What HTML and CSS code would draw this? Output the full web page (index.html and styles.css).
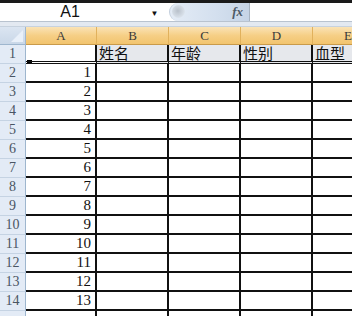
FILE: index.html
```html
<!DOCTYPE html>
<html lang="zh-CN">
<head>
    <meta charset="UTF-8">
    <title>Sheet1</title>
    <link rel="stylesheet" href="styles.css">
</head>
<body>
    <div class="topbar"></div>
    <div class="formula-bar">
        <div class="name-box">A1</div>
        <div class="drop">&#9660;</div>
        <div class="fx-pill">
            <span class="knob"></span>
            <span class="fx">fx</span>
        </div>
        <div class="formula-input"></div>
    </div>
    <div class="gap"></div>

    <div class="sheet" id="sheet">
        <div class="corner">
            <svg width="14" height="14" viewBox="0 0 14 14"><polygon points="13,1 13,13 1,13" fill="#e9f0f9"/></svg>
        </div>
        <div class="col-head">A</div>
        <div class="col-head">B</div>
        <div class="col-head">C</div>
        <div class="col-head">D</div>
        <div class="col-head last">E</div>

        <div class="row-head">1</div>
        <div class="cell first active"><span class="mark"></span></div>
        <div class="cell first sel">姓名</div>
        <div class="cell first sel">年龄</div>
        <div class="cell first sel">性别</div>
        <div class="cell first sel">血型</div>
    </div>

    <script>
        // rows 2..15, column A holds a running number; row 15 is only a sliver
        const sheet = document.getElementById('sheet');
        for (let r = 2; r <= 15; r++) {
            let html = `<div class="row-head">${r <= 14 ? r : ''}</div>`;
            html += `<div class="cell num">${r <= 14 ? r - 1 : ''}</div>`;
            for (let c = 0; c < 4; c++) {
                html += `<div class="cell"></div>`;
            }
            sheet.insertAdjacentHTML('beforeend', html);
        }
    </script>
</body>
</html>
```

FILE: styles.css
```css
html, body {
    margin: 0;
    padding: 0;
    overflow: hidden;
    background: #fff;
}
body {
    width: 352px;
    height: 316px;
    font-family: "Liberation Sans", Arial, sans-serif;
}
.topbar {
    height: 3px;
    background: #1a1a1a;
}
.formula-bar {
    height: 18px;
    display: flex;
    align-items: center;
    background: #fff;
    border-bottom: 1px solid #b9c3cf;
}
.name-box {
    width: 140px;
    text-align: center;
    font-size: 16px;
    color: #111;
}
.drop {
    width: 29px;
    font-size: 8px;
    color: #111;
    text-align: center;
    padding-top: 2px;
}
.fx-pill {
    width: 81px;
    height: 18px;
    display: flex;
    align-items: center;
    justify-content: flex-end;
    box-sizing: border-box;
    border-radius: 9px 0 0 9px;
    border-left: 1px solid #c3cfdd;
    border-right: 1px solid #a7b3c1;
    background: linear-gradient(to right, #e4ecf6, #d3dfee 60%, #c6d4e6);
    position: relative;
}
.knob {
    position: absolute;
    left: 2px;
    top: 2px;
    width: 13px;
    height: 13px;
    border-radius: 50%;
    background: radial-gradient(circle at 45% 45%, #b9c1cb, #dbe3ec 70%, transparent 75%);
}
.fx {
    font-family: "Liberation Serif", "Times New Roman", serif;
    font-style: italic;
    font-weight: bold;
    font-size: 13px;
    color: #4d5966;
    padding-right: 6px;
}
.formula-input {
    flex: 1;
    height: 18px;
    background: #fff;
}
.gap {
    height: 4px;
    background: #e3e9f1;
    border-bottom: 1px solid #c7d2de;
}

.sheet {
    display: grid;
    grid-template-columns: 26px 71px 72px 72px 72px 39px;
    grid-auto-rows: 19px;
    grid-template-rows: 18px;
    width: 352px;
}
.corner {
    background: linear-gradient(#dbe5f1, #c9d7e8);
    border-right: 1px solid #9eb6ce;
    border-bottom: 1px solid #9eb6ce;
    box-sizing: border-box;
    display: flex;
    align-items: flex-end;
    justify-content: flex-end;
}
.corner svg {
    display: block;
    margin: 0 1px 1px 0;
}
.col-head {
    background: linear-gradient(#fae3b6, #f6cf86 50%, #f2c46e);
    border-right: 1px solid #e1b15c;
    border-bottom: 1px solid #c99a4a;
    box-sizing: border-box;
    text-align: center;
    font-family: "Liberation Serif", "DejaVu Serif", serif;
    font-size: 13px;
    line-height: 17px;
    color: #3a3a3a;
}
.col-head.last {
    text-align: left;
    padding-left: 31px;
    border-right: none;
}
.row-head {
    background: #e3ebf6;
    border-right: 1px solid #9eb6ce;
    border-bottom: 1px solid #c5d3e3;
    box-sizing: border-box;
    text-align: center;
    font-family: "Liberation Serif", "DejaVu Serif", serif;
    font-size: 14px;
    line-height: 18px;
    color: #4a5563;
}
.cell {
    box-sizing: border-box;
    border-right: 2px solid #111;
    border-bottom: 2px solid #111;
    background: #fff;
    font-family: "Liberation Serif", "Noto Sans CJK SC", serif;
    font-size: 14px;
    line-height: 17px;
    color: #111;
    padding: 0 2px;
    white-space: nowrap;
}
.sheet > .cell:nth-child(6n) {
    border-right: none;
}
.cell.first {
    border-bottom: 3px double #111;
    line-height: 16px;
}
.cell.sel {
    background: #e6e8ec;
    font-family: "Noto Sans CJK SC", sans-serif;
    font-size: 15px;
}
.cell.active {
    position: relative;
}
.mark {
    position: absolute;
    left: 1px;
    bottom: -2px;
    width: 5px;
    height: 1px;
    border-top: 1px solid #000;
    border-bottom: 1px solid #000;
}
.cell.num {
    text-align: right;
    font-size: 15px;
    padding-right: 4px;
}
```
